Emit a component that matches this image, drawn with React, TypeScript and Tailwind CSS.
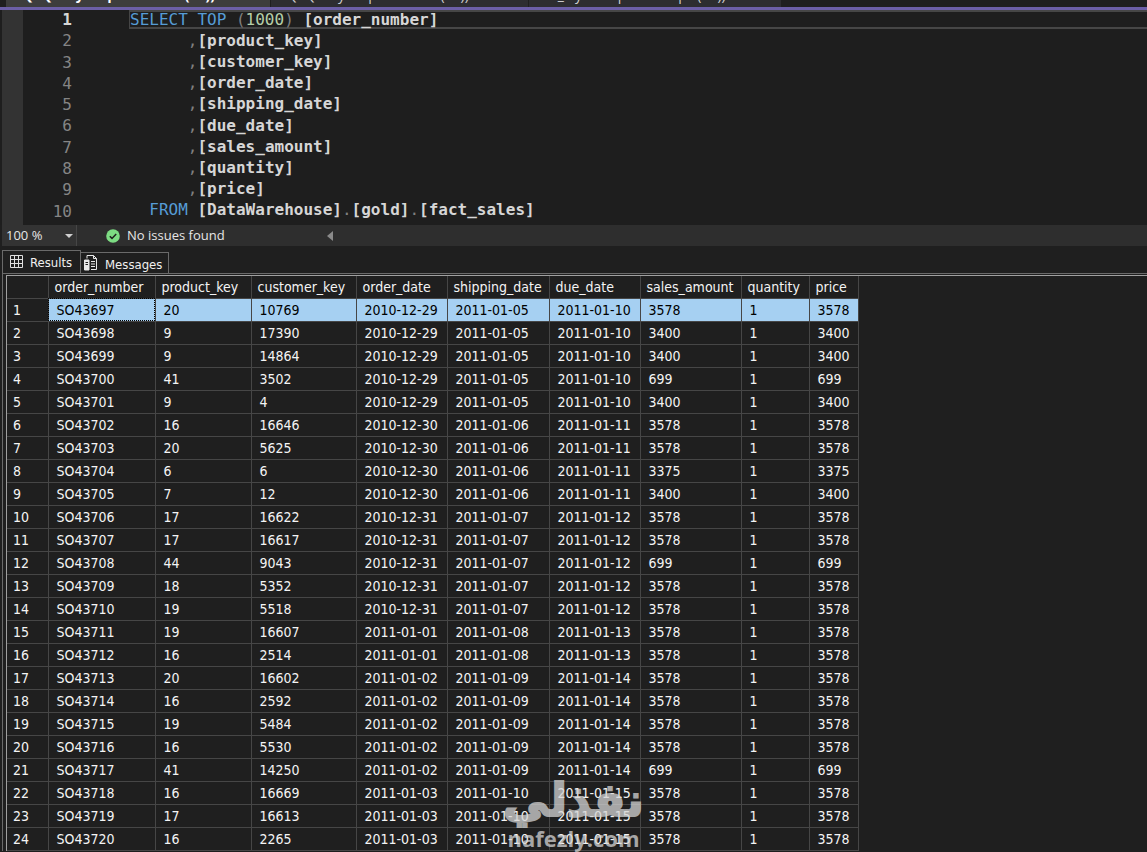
const tabs = [
  { title: 'SQLQuery1.sql - Data...e (52))*', className: 'w-[265px] bg-[#3d3d3d] font-bold text-white' },
  { title: 'SQLQuery2.sql - Data...e (61))', className: 'w-[258px] bg-[#2d2d30] text-[#d0d0d0]' },
  { title: 'ddl_layers.sql - Data...pc (58))', className: 'w-[253px] bg-[#2d2d30] text-[#d0d0d0]' },
]

const columns = [
  'product_key',
  'customer_key',
  'order_date',
  'shipping_date',
  'due_date',
  'sales_amount',
  'quantity',
  'price',
]

const headers = ['order_number', ...columns]

const widths = [
  'w-[41px]',
  'w-[107px]',
  'w-[96px]',
  'w-[105px]',
  'w-[91px]',
  'w-[102px]',
  'w-[91px]',
  'w-[101px]',
  'w-[68px]',
  'w-[49px]',
]

// order_number, product_key, customer_key, order_date, shipping_date, due_date, price
const rows = [
  ['SO43697', '20', '10769', '2010-12-29', '2011-01-05', '2011-01-10', '3578'],
  ['SO43698', '9', '17390', '2010-12-29', '2011-01-05', '2011-01-10', '3400'],
  ['SO43699', '9', '14864', '2010-12-29', '2011-01-05', '2011-01-10', '3400'],
  ['SO43700', '41', '3502', '2010-12-29', '2011-01-05', '2011-01-10', '699'],
  ['SO43701', '9', '4', '2010-12-29', '2011-01-05', '2011-01-10', '3400'],
  ['SO43702', '16', '16646', '2010-12-30', '2011-01-06', '2011-01-11', '3578'],
  ['SO43703', '20', '5625', '2010-12-30', '2011-01-06', '2011-01-11', '3578'],
  ['SO43704', '6', '6', '2010-12-30', '2011-01-06', '2011-01-11', '3375'],
  ['SO43705', '7', '12', '2010-12-30', '2011-01-06', '2011-01-11', '3400'],
  ['SO43706', '17', '16622', '2010-12-31', '2011-01-07', '2011-01-12', '3578'],
  ['SO43707', '17', '16617', '2010-12-31', '2011-01-07', '2011-01-12', '3578'],
  ['SO43708', '44', '9043', '2010-12-31', '2011-01-07', '2011-01-12', '699'],
  ['SO43709', '18', '5352', '2010-12-31', '2011-01-07', '2011-01-12', '3578'],
  ['SO43710', '19', '5518', '2010-12-31', '2011-01-07', '2011-01-12', '3578'],
  ['SO43711', '19', '16607', '2011-01-01', '2011-01-08', '2011-01-13', '3578'],
  ['SO43712', '16', '2514', '2011-01-01', '2011-01-08', '2011-01-13', '3578'],
  ['SO43713', '20', '16602', '2011-01-02', '2011-01-09', '2011-01-14', '3578'],
  ['SO43714', '16', '2592', '2011-01-02', '2011-01-09', '2011-01-14', '3578'],
  ['SO43715', '19', '5484', '2011-01-02', '2011-01-09', '2011-01-14', '3578'],
  ['SO43716', '16', '5530', '2011-01-02', '2011-01-09', '2011-01-14', '3578'],
  ['SO43717', '41', '14250', '2011-01-02', '2011-01-09', '2011-01-14', '699'],
  ['SO43718', '16', '16669', '2011-01-03', '2011-01-10', '2011-01-15', '3578'],
  ['SO43719', '17', '16613', '2011-01-03', '2011-01-10', '2011-01-15', '3578'],
  ['SO43720', '16', '2265', '2011-01-03', '2011-01-10', '2011-01-15', '3578'],
]

function TabStrip() {
  return (
    <nav className="flex h-[10px] overflow-hidden border-b-3 border-[#6c5fa7] bg-[#1f1f1f] pl-[6px]">
      {tabs.map((tab) => (
        <button
          key={tab.title}
          className={`flex h-[7px] items-end overflow-hidden border-r border-[#1f1f1f] pl-2 text-left font-['Open_Sans',sans-serif] text-sm whitespace-nowrap ${tab.className}`}
        >
          <span className="mb-1 block leading-4">{tab.title}</span>
        </button>
      ))}
    </nav>
  )
}

function Name({ children }: { children: string }) {
  return <span className="font-bold text-[#d6d6d6]">[{children}]</span>
}

function Editor() {
  return (
    <section className="flex h-[215px] bg-[#1e1e1e] font-['DejaVu_Sans_Mono',monospace] text-base leading-[19px]">
      <div className="ml-[2px] w-[21px] bg-[#333333]" />
      <ol className="grid w-[49px] grid-rows-10 pb-[2px] text-right text-[#858585]">
        {Array.from({ length: 10 }, (_, i) => (
          <li key={i} className={i === 0 ? 'font-bold text-[#d6d6d6]' : ''}>
            {i + 1}
          </li>
        ))}
      </ol>
      <div className="ml-[58px] grid flex-1 grid-rows-10 pb-1 whitespace-pre text-[#808080]">
        <div className="mb-[2px] -ml-px border-y-2 border-l border-[#464646] leading-[15px]">
          <span className="text-[#569cd6]">SELECT TOP</span> (<span className="text-[#b5cea8]">1000</span>){' '}
          <Name>order_number</Name>
        </div>
        {columns.map((column) => (
          <div key={column}>
            {'      ,'}
            <Name>{column}</Name>
          </div>
        ))}
        <div>
          {'  '}
          <span className="text-[#569cd6]">FROM</span> <Name>DataWarehouse</Name>.<Name>gold</Name>.
          <Name>fact_sales</Name>
        </div>
      </div>
    </section>
  )
}

function StatusBar() {
  return (
    <div className="ml-[2px] flex h-[21px] items-center bg-[#2e2e2e] font-['Open_Sans',sans-serif] text-[13px] text-[#e6e6e6]">
      <button className="flex h-full w-[75px] items-center justify-between border-r border-[#464646] bg-[#333333] px-1 pr-[3px]">
        100 %
        <svg className="h-1 w-2" viewBox="0 0 8 4" fill="#d0d0d0">
          <path d="M0 0h8L4 4z" />
        </svg>
      </button>
      <svg className="ml-[29px] size-[14px]" viewBox="0 0 14 14">
        <circle cx="7" cy="7" r="6.8" fill="#7ddc83" />
        <path d="M3.8 7.2l2.2 2.2 4.2-4.3" fill="none" stroke="#1e1e1e" strokeWidth="1.5" />
      </svg>
      <span className="ml-[7px] w-[200px]">No issues found</span>
      <svg className="h-[10px] w-[6px]" viewBox="0 0 6 10" fill="#8a8a8a">
        <path d="M6 0v10L0 5z" />
      </svg>
    </div>
  )
}

function ResultTabs() {
  return (
    <div className="flex h-[27px] items-end pl-[2px] text-[13px] text-[#f0f0f0]">
      <button className="flex h-[23px] w-[79px] items-start gap-[7px] border border-b-0 border-[#6a6a6a] pt-1 pl-[7px] leading-4">
        <svg className="size-[13px]" viewBox="0 0 13 13" fill="none" stroke="#e0e0e0">
          <path d="M.5 .5h12v12H.5zM4.5 .5v12M8.5 .5v12M.5 4.5h12M.5 8.5h12" />
        </svg>
        Results
      </button>
      <button className="flex h-[21px] w-[88px] items-start gap-[7px] border border-b-0 border-l-0 border-[#6a6a6a] pt-1 pl-[3px] leading-4">
        <svg className="-mt-[2px] h-4 w-[14px]" viewBox="0 0 14 16" fill="none" stroke="#e8e8e8">
          <path d="M3 3.500V.5h6.500l3 3v11H7M9.500 .5v3h3M7 6.500h4M7 9h4M7 11.500h4" />
          <path d="M.5 5h4.500v10H.5z" fill="#e8e8e8" />
          <path d="M1.500 7.500h2.500M1.500 9.500h2.500" stroke="#1e1e1e" />
        </svg>
        Messages
      </button>
    </div>
  )
}

function ResultGrid() {
  return (
    <table className="w-[851px] table-fixed border-collapse leading-4 text-[#f4f4f4]">
      <colgroup>
        {widths.map((width, i) => (
          <col key={i} className={width} />
        ))}
      </colgroup>
      <thead>
        <tr className="h-[22px]">
          <th className="border-r border-b border-[#464646]" />
          {headers.map((header) => (
            <th key={header} className="border-r border-b border-[#464646] pl-[6px] text-left font-normal">
              {header}
            </th>
          ))}
        </tr>
      </thead>
      <tbody>
        {rows.map(([order, product, customer, ordered, shipped, due, price], i) => (
          <tr key={order} className="h-[23px]">
            <th className="border-r border-b border-[#464646] pl-[6px] text-left font-normal">{i + 1}</th>
            {[order, product, customer, ordered, shipped, due, price, '1', price].map((value, j) => (
              <td
                key={j}
                className={`border-r border-b border-[#464646] pl-2 ${i === 0 ? 'bg-[#a6d0f2] text-black' : ''} ${
                  i === 0 && j === 0 ? 'outline-1 -outline-offset-1 outline-black outline-dotted' : ''
                }`}
              >
                {value}
              </td>
            ))}
          </tr>
        ))}
      </tbody>
    </table>
  )
}

function Watermark() {
  return (
    <div className="pointer-events-none absolute inset-x-0 bottom-0 flex flex-col items-center font-bold text-[#d4d4d4] opacity-75">
      <span
        lang="ar"
        dir="rtl"
        className="font-['DejaVu_Sans',sans-serif] text-[46px] leading-[48px] [-webkit-text-stroke:2px_#d4d4d4]"
      >
        نفذلي
      </span>
      <span className="font-['Open_Sans',sans-serif] text-[22px] leading-7">nafezly.com</span>
    </div>
  )
}

export default function App() {
  return (
    <main className="relative h-screen overflow-hidden bg-[#1f1f1f] font-['DejaVu_Sans_Condensed','Noto_Sans',sans-serif] text-sm">
      <TabStrip />
      <Editor />
      <StatusBar />
      <ResultTabs />
      <div className="ml-[2px] border-t border-l border-[#6a6a6a] pt-px pl-[3px]">
        <div className="border-t border-l border-[#a0a0a0]">
          <ResultGrid />
        </div>
      </div>
      <Watermark />
    </main>
  )
}
